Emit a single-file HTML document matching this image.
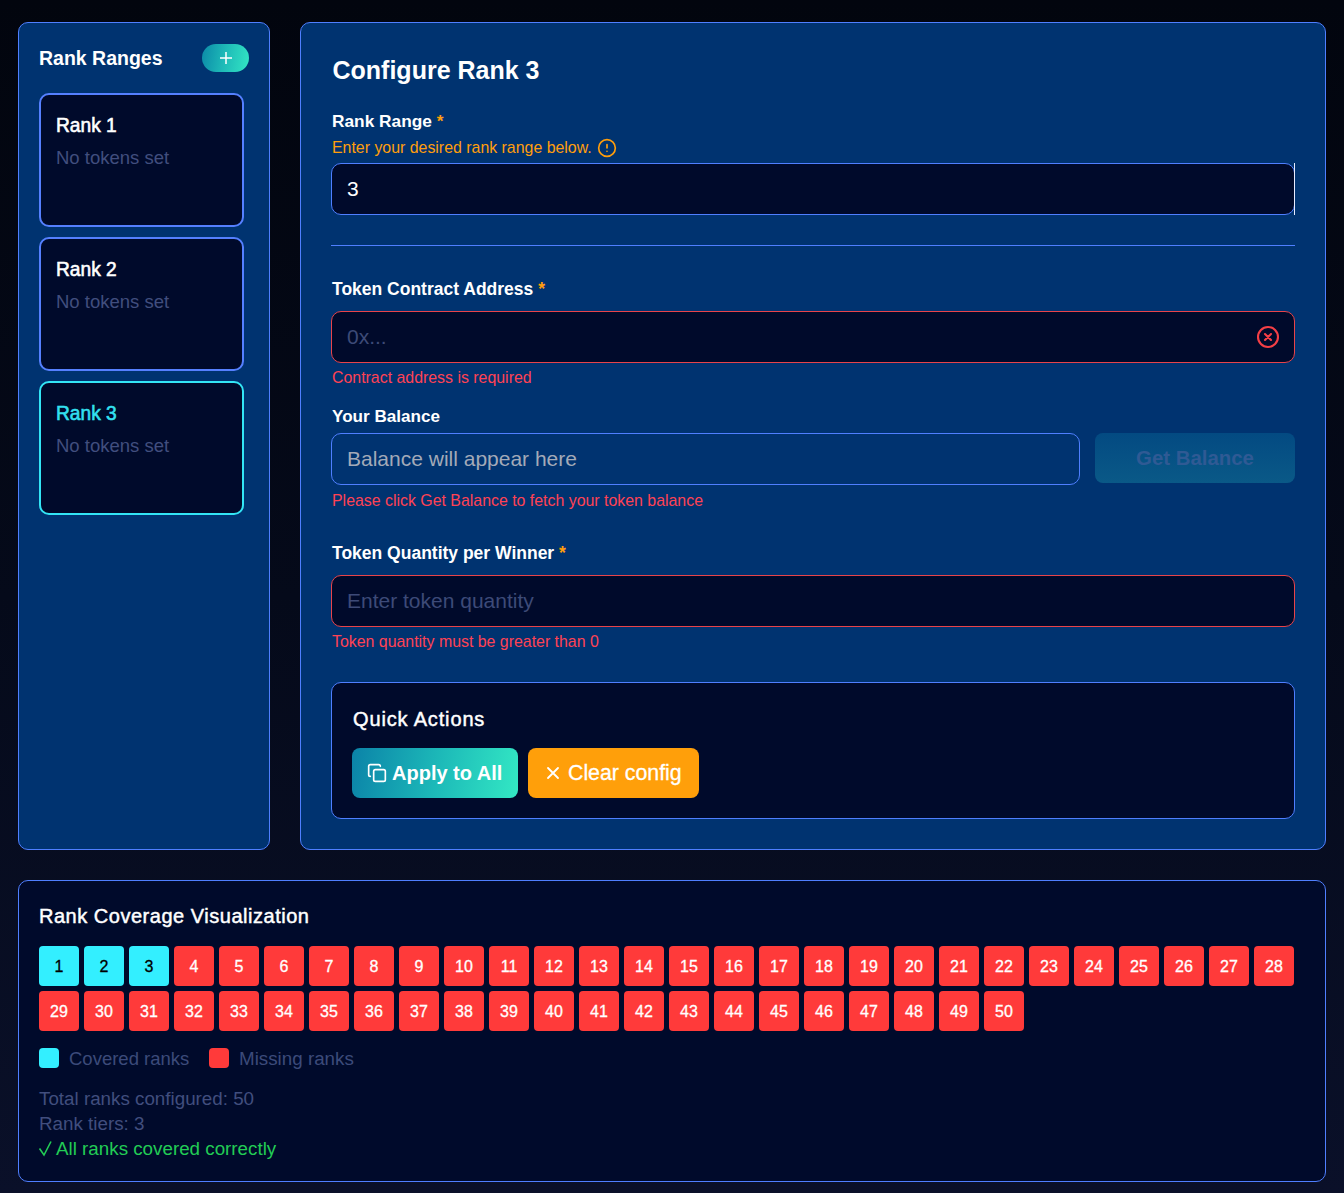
<!DOCTYPE html>
<html><head><meta charset="utf-8">
<style>
*{margin:0;padding:0;box-sizing:border-box}
html,body{width:1344px;height:1193px;overflow:hidden}
body{position:relative;font-family:"Liberation Sans",sans-serif;background:linear-gradient(to bottom,#02050e 0%,#050a1a 50%,#0a1029 100%);color:#fff}
.a{position:absolute;white-space:nowrap;line-height:1}
.panel{position:absolute;background:#003370;border:1px solid #4f7fff;border-radius:10px}
.dark{background:#000a2b}
.card{position:absolute;left:39px;width:205px;height:134px;border:2px solid #5580ff;border-radius:10px;background:#000a2b}
.card.act{border-color:#33e5f5}
.b{font-weight:bold}
.input{position:absolute;border:1px solid #4f7fff;border-radius:10px;background:#000a2b}
.red{border-color:#e8434a}
.err{color:#ff4254;font-size:15.9px}
.lbl{font-size:17.5px;font-weight:bold;color:#fff}
.ast{color:#ff9e0c}
.sq{position:absolute;width:40px;height:40px;border-radius:4px;background:#ff3a3a;color:#fff;font-size:16px;line-height:42px;text-align:center;-webkit-text-stroke:0.3px #fff}
.sq.c{-webkit-text-stroke:0.3px #000}
.sq.c{background:#33efff;color:#000}
</style></head><body>

<!-- Sidebar -->
<div class="panel" style="left:18px;top:22px;width:252px;height:828px"></div>
<div class="a b" style="left:39px;font-size:19.5px;top:48.5px">Rank Ranges</div>
<div class="a" style="left:202px;top:44px;width:47px;height:28px;border-radius:14px;background:linear-gradient(100deg,#0b8aa8 0%,#1fbcb8 50%,#33e6c4 100%)">
  <svg width="47" height="28" style="position:absolute;left:0;top:0"><path d="M18 14h12M24 8v12" stroke="#fff" stroke-width="1.5" fill="none"/></svg>
</div>

<div class="card" style="top:93px"></div>
<div class="a" style="left:56px;top:114.5px;font-size:20.5px;-webkit-text-stroke:0.6px #fff"><span style="display:inline-block;transform:scaleX(0.935);transform-origin:0 0">Rank 1</span></div>
<div class="a" style="left:56px;top:148.5px;font-size:18.5px;color:#414e7e">No tokens set</div>

<div class="card" style="top:237px"></div>
<div class="a" style="left:56px;top:258.5px;font-size:20.5px;-webkit-text-stroke:0.6px #fff"><span style="display:inline-block;transform:scaleX(0.935);transform-origin:0 0">Rank 2</span></div>
<div class="a" style="left:56px;top:292.5px;font-size:18.5px;color:#414e7e">No tokens set</div>

<div class="card act" style="top:381px"></div>
<div class="a" style="left:56px;top:402.5px;font-size:20.5px;-webkit-text-stroke:0.6px #33e0f0;color:#33e0f0"><span style="display:inline-block;transform:scaleX(0.935);transform-origin:0 0">Rank 3</span></div>
<div class="a" style="left:56px;top:436.5px;font-size:18.5px;color:#414e7e">No tokens set</div>

<!-- Right panel -->
<div class="panel" style="left:300px;top:22px;width:1026px;height:828px"></div>
<div class="a b" style="left:332.5px;top:58px;font-size:25px">Configure Rank 3</div>

<div class="a lbl" style="left:332px;top:112.5px;font-size:17.3px">Rank Range <span class="ast">*</span></div>
<div class="a" style="left:332px;top:139.5px;font-size:15.9px;color:#ff9e0c">Enter your desired rank range below.</div>
<svg class="a" style="left:597px;top:138px" width="20" height="20" viewBox="0 0 24 24" fill="none" stroke="#ff9e0c" stroke-width="2" stroke-linecap="round"><circle cx="12" cy="12" r="10"/><path d="M12 8v4M12 16h.01"/></svg>

<div class="input" style="left:331px;top:163px;width:964px;height:52px"></div>
<div class="a" style="left:1294px;top:163px;width:1px;height:52px;background:#e8ecff"></div>
<div class="a" style="left:347px;top:178px;font-size:21px">3</div>

<div class="a" style="left:331px;top:245px;width:964px;height:1px;background:#4f7fff"></div>

<div class="a lbl" style="left:332px;top:280.5px">Token Contract Address <span class="ast">*</span></div>
<div class="input red" style="left:331px;top:311px;width:964px;height:52px"></div>
<div class="a" style="left:347px;top:325.5px;font-size:21px;color:#3d4a78">0x...</div>
<svg class="a" style="left:1255.5px;top:324.5px" width="24" height="24" viewBox="0 0 24 24" fill="none" stroke="#f43f46" stroke-width="2.1" stroke-linecap="round"><circle cx="12" cy="12" r="10"/><path d="M15 9l-6 6M9 9l6 6"/></svg>
<div class="a err" style="left:332px;top:369.5px">Contract address is required</div>

<div class="a lbl" style="left:332px;top:407.5px;font-size:17.1px">Your Balance</div>
<div class="input" style="left:331px;top:433px;width:749px;height:52px;background:transparent"></div>
<div class="a" style="left:347px;top:448px;font-size:21px;color:#a3aab8">Balance will appear here</div>
<div class="a" style="left:1095px;top:433px;width:200px;height:50px;border-radius:8px;background:linear-gradient(to bottom,#034a82,#0a5987)"></div>
<div class="a b" style="left:1095px;width:200px;text-align:center;top:448px;font-size:20.4px;color:#2f5a94">Get Balance</div>
<div class="a err" style="left:332px;top:492.5px">Please click Get Balance to fetch your token balance</div>

<div class="a lbl" style="left:332px;top:544.5px">Token Quantity per Winner <span class="ast">*</span></div>
<div class="input red" style="left:331px;top:575px;width:964px;height:52px"></div>
<div class="a" style="left:347px;top:590px;font-size:21px;color:#3d4a78">Enter token quantity</div>
<div class="a err" style="left:332px;top:633.5px">Token quantity must be greater than 0</div>

<div class="input" style="left:331px;top:682px;width:964px;height:137px"></div>
<div class="a" style="left:353px;top:708.5px;font-size:20px;letter-spacing:0.85px;-webkit-text-stroke:0.45px #fff">Quick Actions</div>

<div class="a" style="left:352px;top:748px;width:166px;height:50px;border-radius:8px;background:linear-gradient(100deg,#0b83a8 0%,#1cb8b8 50%,#33e8c4 100%)"></div>
<svg class="a" style="left:367px;top:763px" width="20" height="20" viewBox="0 0 24 24" fill="none" stroke="#fff" stroke-width="2" stroke-linecap="round" stroke-linejoin="round"><rect x="8" y="8" width="14" height="14" rx="2"/><path d="M4 16c-1.1 0-2-.9-2-2V4c0-1.1.9-2 2-2h10c1.1 0 2 .9 2 2"/></svg>
<div class="a b" style="left:392px;top:763px;font-size:20px">Apply to All</div>

<div class="a" style="left:528px;top:748px;width:171px;height:50px;border-radius:8px;background:#ff9f0a"></div>
<svg class="a" style="left:543px;top:763px" width="20" height="20" viewBox="0 0 24 24" fill="none" stroke="#fff" stroke-width="2.2" stroke-linecap="round"><path d="M18 6L6 18M6 6l12 12"/></svg>
<div class="a" style="left:568px;top:763px;font-size:21.3px;-webkit-text-stroke:0.3px #fff">Clear config</div>

<!-- Bottom panel -->
<div class="panel dark" style="left:18px;top:880px;width:1308px;height:302px"></div>
<div class="a" style="left:39px;top:906px;font-size:20px;letter-spacing:0.52px;-webkit-text-stroke:0.45px #fff">Rank Coverage Visualization</div>
<div class="sq c" style="left:39px;top:946px">1</div>
<div class="sq c" style="left:84px;top:946px">2</div>
<div class="sq c" style="left:129px;top:946px">3</div>
<div class="sq" style="left:174px;top:946px">4</div>
<div class="sq" style="left:219px;top:946px">5</div>
<div class="sq" style="left:264px;top:946px">6</div>
<div class="sq" style="left:309px;top:946px">7</div>
<div class="sq" style="left:354px;top:946px">8</div>
<div class="sq" style="left:399px;top:946px">9</div>
<div class="sq" style="left:444px;top:946px">10</div>
<div class="sq" style="left:489px;top:946px">11</div>
<div class="sq" style="left:534px;top:946px">12</div>
<div class="sq" style="left:579px;top:946px">13</div>
<div class="sq" style="left:624px;top:946px">14</div>
<div class="sq" style="left:669px;top:946px">15</div>
<div class="sq" style="left:714px;top:946px">16</div>
<div class="sq" style="left:759px;top:946px">17</div>
<div class="sq" style="left:804px;top:946px">18</div>
<div class="sq" style="left:849px;top:946px">19</div>
<div class="sq" style="left:894px;top:946px">20</div>
<div class="sq" style="left:939px;top:946px">21</div>
<div class="sq" style="left:984px;top:946px">22</div>
<div class="sq" style="left:1029px;top:946px">23</div>
<div class="sq" style="left:1074px;top:946px">24</div>
<div class="sq" style="left:1119px;top:946px">25</div>
<div class="sq" style="left:1164px;top:946px">26</div>
<div class="sq" style="left:1209px;top:946px">27</div>
<div class="sq" style="left:1254px;top:946px">28</div>
<div class="sq" style="left:39px;top:991px">29</div>
<div class="sq" style="left:84px;top:991px">30</div>
<div class="sq" style="left:129px;top:991px">31</div>
<div class="sq" style="left:174px;top:991px">32</div>
<div class="sq" style="left:219px;top:991px">33</div>
<div class="sq" style="left:264px;top:991px">34</div>
<div class="sq" style="left:309px;top:991px">35</div>
<div class="sq" style="left:354px;top:991px">36</div>
<div class="sq" style="left:399px;top:991px">37</div>
<div class="sq" style="left:444px;top:991px">38</div>
<div class="sq" style="left:489px;top:991px">39</div>
<div class="sq" style="left:534px;top:991px">40</div>
<div class="sq" style="left:579px;top:991px">41</div>
<div class="sq" style="left:624px;top:991px">42</div>
<div class="sq" style="left:669px;top:991px">43</div>
<div class="sq" style="left:714px;top:991px">44</div>
<div class="sq" style="left:759px;top:991px">45</div>
<div class="sq" style="left:804px;top:991px">46</div>
<div class="sq" style="left:849px;top:991px">47</div>
<div class="sq" style="left:894px;top:991px">48</div>
<div class="sq" style="left:939px;top:991px">49</div>
<div class="sq" style="left:984px;top:991px">50</div>

<div class="a" style="left:39px;top:1048px;width:20px;height:20px;border-radius:4px;background:#33efff"></div>
<div class="a" style="left:69px;top:1050px;font-size:18.5px;color:#3c4a7a">Covered ranks</div>
<div class="a" style="left:209px;top:1048px;width:20px;height:20px;border-radius:4px;background:#ff3a3a"></div>
<div class="a" style="left:239px;top:1050px;font-size:18.8px;color:#3c4a7a">Missing ranks</div>

<div class="a" style="left:39px;top:1090px;font-size:18.8px;color:#414e7e">Total ranks configured: 50</div>
<div class="a" style="left:39px;top:1115px;font-size:18.8px;color:#414e7e">Rank tiers: 3</div>
<svg class="a" style="left:37px;top:1139px" width="18" height="18"><path d="M2.5 9.5L7 16L14 2.5" stroke="#22cc55" stroke-width="1.6" fill="none"/></svg>
<div class="a" style="left:56px;top:1140px;font-size:18.8px;color:#22cc55">All ranks covered correctly</div>

</body></html>
